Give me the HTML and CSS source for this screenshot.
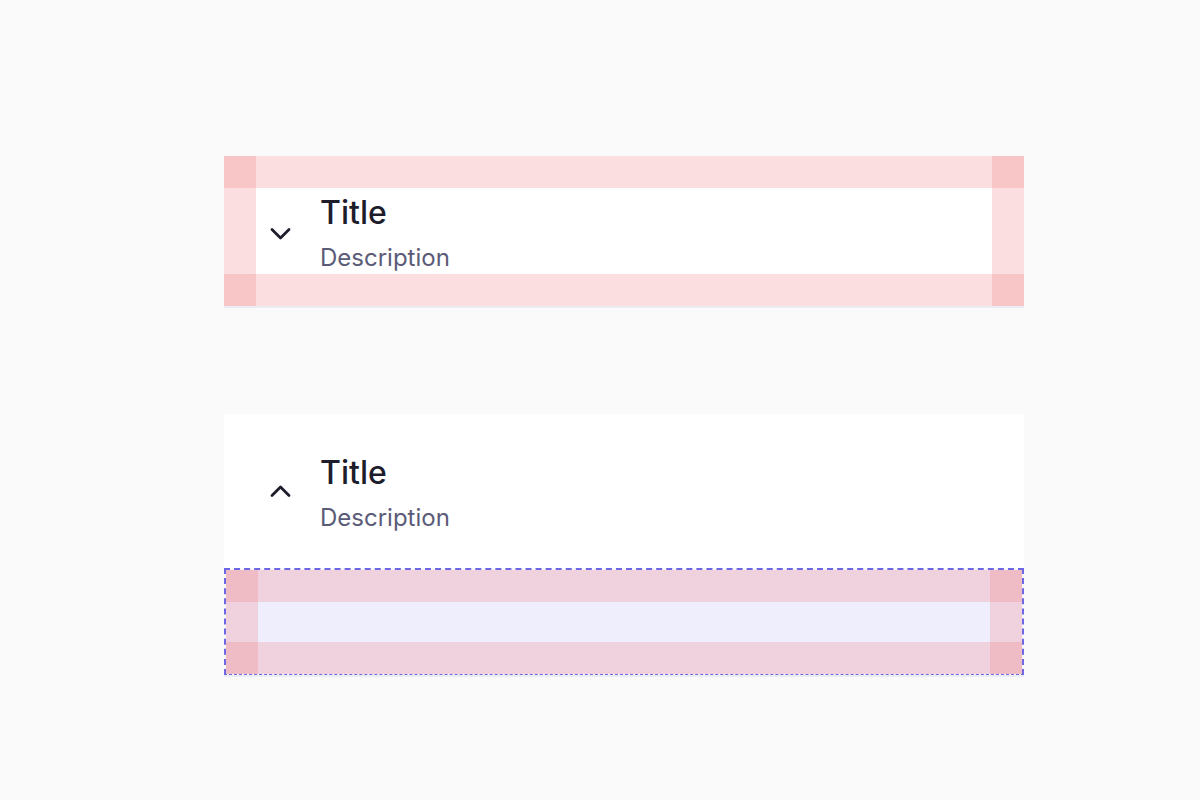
FILE: index.html
```html
<!DOCTYPE html>
<html lang="en">
<head>
    <meta charset="UTF-8">
    <meta name="viewport" content="width=device-width, initial-scale=1.0">
    <title>Accordion</title>
    <link rel="stylesheet" href="styles.css">
</head>
<body>
    <div class="accordion">
        <div class="item">
            <div class="item-header show-padding">
                <span class="item-icon">
                    <svg width="48" height="48" viewBox="0 0 48 48"><path d="M16 22.5 L24.5 31 L33 22.5"/></svg>
                </span>
                <div class="item-text">
                    <div class="item-title">Title</div>
                    <div class="item-desc">Description</div>
                </div>
            </div>
        </div>

        <div class="item is-open">
            <div class="item-header">
                <span class="item-icon">
                    <svg width="48" height="48" viewBox="0 0 48 48"><path d="M16 28.5 L24.5 20 L33 28.5"/></svg>
                </span>
                <div class="item-text">
                    <div class="item-title">Title</div>
                    <div class="item-desc">Description</div>
                </div>
            </div>
            <div class="item-panel show-padding">
                <div class="panel-body"></div>
            </div>
        </div>
    </div>
</body>
</html>
```

FILE: styles.css
```css
body {
    margin: 0;
    background-color: #fafafa;
    font-family: Inter, "Noto Sans", sans-serif;
}

.accordion {
    width: 800px;
    margin: 156px 0 0 224px;
    display: flex;
    flex-direction: column;
    gap: 106px;
}

.item {
    border-bottom: 2px solid #ececf3;
}

.item-header {
    display: flex;
    align-items: center;
    gap: 16px;
    padding: 32px;
    background-color: #fff;
}

.is-open .item-header {
    padding: 34px 32px;
}

.item-icon {
    width: 48px;
    height: 48px;
    flex-shrink: 0;
}

.item-icon svg {
    display: block;
    fill: none;
    stroke: #1e1d2c;
    stroke-width: 2.8;
    stroke-linecap: round;
    stroke-linejoin: round;
}

.item-text {
    display: flex;
    flex-direction: column;
    gap: 3px;
}

.item-title {
    font-size: 32px;
    font-weight: 500;
    line-height: 50px;
    color: #1e1d2c;
}

.item-desc {
    font-size: 24px;
    line-height: 33px;
    color: #5b5b78;
}

.item-panel {
    padding: 32px;
    border: 2px dashed #6d67e4;
    border-bottom-width: 1px;
    background-color: #efeefc;
}

.panel-body {
    height: 40px;
}

/* padding highlight: four translucent strips, corners overlap */
.show-padding {
    background-image:
        linear-gradient(rgba(239, 119, 123, 0.24), rgba(239, 119, 123, 0.24)),
        linear-gradient(rgba(239, 119, 123, 0.24), rgba(239, 119, 123, 0.24)),
        linear-gradient(rgba(239, 119, 123, 0.24), rgba(239, 119, 123, 0.24)),
        linear-gradient(rgba(239, 119, 123, 0.24), rgba(239, 119, 123, 0.24));
    background-size: 100% 32px, 100% 32px, 32px 100%, 32px 100%;
    background-position: top, bottom, left, right;
    background-repeat: no-repeat;
    background-origin: padding-box;
    background-clip: padding-box;
}
```
